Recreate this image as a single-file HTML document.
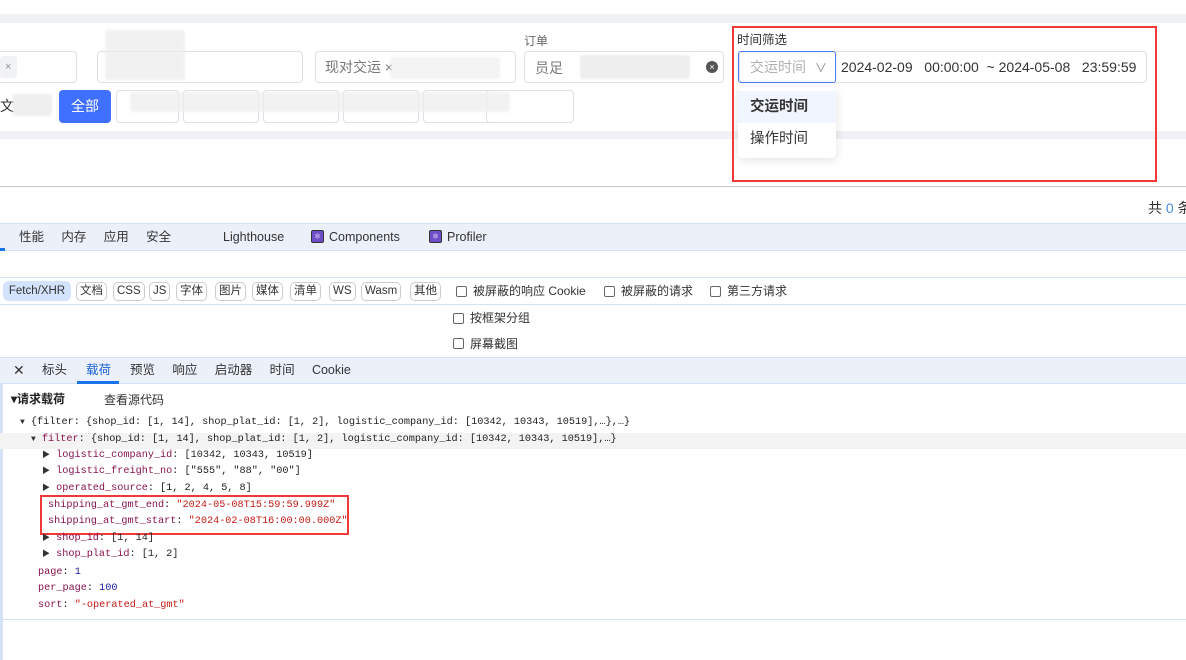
<!DOCTYPE html>
<html><head><meta charset="utf-8"><style>
*{margin:0;padding:0;box-sizing:border-box}
body{width:1186px;height:660px;position:relative;overflow:hidden;background:#fff;font-family:"Liberation Sans","Noto Sans CJK SC",sans-serif;font-size:13px;color:#333}
.a{position:absolute;white-space:nowrap;line-height:16px}
.bl{position:absolute;background:#e2e2e2;border-radius:3px;filter:blur(1px)}
.inp{position:absolute;border:1px solid #dcdfe6;border-radius:4px;background:#fff}
.btn{position:absolute;border:1px solid #dcdfe6;border-radius:4px;background:#fff;height:33px;top:90px}
.chip{position:absolute;top:282px;height:19px;border:1px solid #ccc;border-radius:5px;font-size:11.5px;line-height:17px;padding:0 3px;color:#333;background:#fff}
.cb{position:absolute;width:11px;height:11px;border:1px solid #666;border-radius:2px}
.mono{font-family:"Liberation Mono","Noto Sans CJK SC",monospace;font-size:10.2px;color:#222}
.k{color:#881350}.s{color:#c41a16}.n{color:#1a1aa6}
.t{font-size:8px;color:#333}
</style></head><body>
<div class="a" style="left:0;top:14px;width:1186px;height:9px;background:#f0f1f5"></div>
<div class="a" style="left:0;top:131px;width:1186px;height:8px;background:#f0f1f5"></div>
<div class="a" style="left:0;top:186px;width:1186px;height:1px;background:#c8c8c8"></div>

<div class="inp" style="left:-4px;top:51px;width:81px;height:32px"></div>
<div class="a" style="left:0;top:56px;width:17px;height:22px;background:#f0f2f5;border-radius:3px;color:#909399;font-size:11px;line-height:22px;padding-left:5px">×</div>
<div class="inp" style="left:97px;top:51px;width:206px;height:32px"></div>
<div class="bl" style="left:105px;top:30px;width:80px;height:50px;background:#ececec;opacity:.7"></div>
<div class="inp" style="left:315px;top:51px;width:201px;height:32px"></div>
<div class="a" style="left:325px;top:59px;font-size:14px;color:#777">现对交运 ×</div>
<div class="bl" style="left:390px;top:57px;width:110px;height:22px;background:#eee;opacity:.7"></div>
<div class="a" style="left:524px;top:33px;font-size:12px;color:#666">订单</div>
<div class="inp" style="left:524px;top:51px;width:200px;height:32px"></div>
<div class="a" style="left:535px;top:60px;font-size:14px;color:#777">员足</div>
<div class="bl" style="left:580px;top:55px;width:110px;height:24px;background:#e8e8e8;opacity:.7"></div>
<div class="a" style="left:706px;top:61px;width:12px;height:12px;border-radius:50%;background:#555;color:#fff;font-size:9px;line-height:12px;text-align:center">×</div>

<div class="a" style="left:0;top:98px;font-size:14px;color:#333">文</div>
<div class="bl" style="left:12px;top:94px;width:40px;height:22px;background:#e5e5e5;opacity:.6"></div>
<div class="a" style="left:59px;top:90px;width:52px;height:33px;background:#4070ff;border-radius:4px;color:#fff;font-size:14px;line-height:33px;text-align:center">全部</div>
<div class="btn" style="left:116px;width:63px"></div>
<div class="btn" style="left:183px;width:76px"></div>
<div class="btn" style="left:263px;width:76px"></div>
<div class="btn" style="left:343px;width:76px"></div>
<div class="btn" style="left:423px;width:76px"></div>
<div class="btn" style="left:486px;width:88px"></div>
<div class="bl" style="left:130px;top:92px;width:380px;height:20px;background:#efefef;opacity:.8"></div>

<div class="a" style="left:737px;top:32px;font-size:12.5px;color:#333">时间筛选</div>
<div class="inp" style="left:739px;top:51px;width:408px;height:32px"></div>
<div class="a" style="left:738px;top:51px;width:98px;height:32px;border:1px solid #4d7cfe;border-radius:3px;color:#b0b0b0;font-size:14px;line-height:30px;padding-left:11px">交运时间 <span style="font-size:12px;color:#888;margin-left:5px">∨</span></div>
<div class="a" style="left:841px;top:59px;font-size:14px;color:#333">2024-02-09&nbsp;&nbsp;&nbsp;00:00:00&nbsp;&nbsp;~ 2024-05-08&nbsp;&nbsp;&nbsp;23:59:59</div>
<div class="a" style="left:738px;top:87px;width:98px;height:71px;background:#fff;border-radius:4px;box-shadow:0 2px 10px rgba(0,0,0,.12)"></div>
<div class="a" style="left:738px;top:91px;width:98px;height:32px;background:#f0f5ff"></div>
<div class="a" style="left:750px;top:99px;font-size:14.5px;font-weight:bold;color:#333">交运时间</div>
<div class="a" style="left:750px;top:131px;font-size:14.5px;color:#333">操作时间</div>
<div class="a" style="left:732px;top:26px;width:425px;height:156px;border:2px solid #f03a3a"></div>

<div class="a" style="left:1148px;top:200px;font-size:14px;color:#333">共 <span style="color:#4a8bd8">0</span> 条</div>

<div class="a" style="left:0;top:223px;width:1186px;height:28px;background:#ebf0f9;border-top:1px solid #d3e2f7;border-bottom:1px solid #d3e2f7"></div>
<div class="a" style="left:0;top:248px;width:5px;height:3px;background:#1a73e8"></div>
<div class="a" style="left:19px;top:229px;font-size:12.5px;color:#333">性能&nbsp;&nbsp;&nbsp;&nbsp; 内存&nbsp;&nbsp;&nbsp;&nbsp; 应用&nbsp;&nbsp;&nbsp;&nbsp; 安全</div>
<div class="a" style="left:223px;top:229px;font-size:12.5px;color:#333">Lighthouse</div>
<div class="a" style="left:311px;top:230px;width:13px;height:13px;background:#6e4ec8;border:1px solid #333;border-radius:2px;color:#fff;font-size:8px;line-height:11px;text-align:center">⚛</div>
<div class="a" style="left:329px;top:229px;font-size:12.5px;color:#333">Components</div>
<div class="a" style="left:429px;top:230px;width:13px;height:13px;background:#6e4ec8;border:1px solid #333;border-radius:2px;color:#fff;font-size:8px;line-height:11px;text-align:center">⚛</div>
<div class="a" style="left:447px;top:229px;font-size:12.5px;color:#333">Profiler</div>

<div class="a" style="left:0;top:277px;width:1186px;height:1px;background:#d3e2f7"></div>
<div class="a" style="left:0;top:304px;width:1186px;height:1px;background:#d3e2f7"></div>
<div class="a" style="left:3px;top:281px;height:20px;width:68px;background:#d3e3fd;border-radius:6px;font-size:11.5px;line-height:20px;text-align:center;color:#333">Fetch/XHR</div>
<div class="chip" style="left:76px">文档</div>
<div class="chip" style="left:113px">CSS</div>
<div class="chip" style="left:149px">JS</div>
<div class="chip" style="left:176px">字体</div>
<div class="chip" style="left:215px">图片</div>
<div class="chip" style="left:252px">媒体</div>
<div class="chip" style="left:290px">清单</div>
<div class="chip" style="left:329px">WS</div>
<div class="chip" style="left:361px">Wasm</div>
<div class="chip" style="left:410px">其他</div>
<div class="cb" style="left:456px;top:286px"></div><div class="a" style="left:473px;top:283px;font-size:12px">被屏蔽的响应 Cookie</div>
<div class="cb" style="left:604px;top:286px"></div><div class="a" style="left:621px;top:283px;font-size:12px">被屏蔽的请求</div>
<div class="cb" style="left:710px;top:286px"></div><div class="a" style="left:727px;top:283px;font-size:12px">第三方请求</div>
<div class="cb" style="left:453px;top:313px"></div><div class="a" style="left:470px;top:310px;font-size:12px">按框架分组</div>
<div class="cb" style="left:453px;top:338px"></div><div class="a" style="left:470px;top:336px;font-size:12px">屏幕截图</div>

<div class="a" style="left:0;top:357px;width:1186px;height:27px;background:#ebf0f9;border-top:1px solid #d3e2f7;border-bottom:1px solid #d3e2f7"></div>
<div class="a" style="left:13px;top:362px;font-size:14px;color:#333">✕</div>
<div class="a" style="left:42px;top:362px;font-size:12.5px;color:#333">标头</div>
<div class="a" style="left:86px;top:362px;font-size:12.5px;color:#1a62d8">载荷</div>
<div class="a" style="left:77px;top:381px;width:42px;height:3px;background:#1a73e8"></div>
<div class="a" style="left:130px;top:362px;font-size:12.5px;color:#333">预览&nbsp;&nbsp;&nbsp;&nbsp; 响应&nbsp;&nbsp;&nbsp;&nbsp; 启动器&nbsp;&nbsp;&nbsp;&nbsp; 时间&nbsp;&nbsp;&nbsp;&nbsp; Cookie</div>
<div class="a" style="left:0;top:384px;width:3px;height:276px;background:#d3e2f7"></div>

<div class="a" style="left:11px;top:391px;font-size:12px;font-weight:bold;color:#222">▾请求载荷</div>
<div class="a" style="left:104px;top:392px;font-size:12px;color:#333">查看源代码</div>
<div class="a" style="left:0;top:433px;width:1186px;height:16px;background:#f3f3f3"></div>
<div class="a mono" style="left:20px;top:415px"><span class="t">▼</span> {filter: {shop_id: [1, 14], shop_plat_id: [1, 2], logistic_company_id: [10342, 10343, 10519],…},…}</div>
<div class="a mono" style="left:31px;top:432px"><span class="t">▼</span> <span class="k">filter</span>: {shop_id: [1, 14], shop_plat_id: [1, 2], logistic_company_id: [10342, 10343, 10519],…}</div>
<div class="a mono" style="left:42px;top:448px"><span class="t">▶</span> <span class="k">logistic_company_id</span>: [10342, 10343, 10519]</div>
<div class="a mono" style="left:42px;top:464px"><span class="t">▶</span> <span class="k">logistic_freight_no</span>: ["555", "88", "00"]</div>
<div class="a mono" style="left:42px;top:481px"><span class="t">▶</span> <span class="k">operated_source</span>: [1, 2, 4, 5, 8]</div>
<div class="a mono" style="left:48px;top:498px"><span class="k">shipping_at_gmt_end</span>: <span class="s">"2024-05-08T15:59:59.999Z"</span></div>
<div class="a mono" style="left:48px;top:514px"><span class="k">shipping_at_gmt_start</span>: <span class="s">"2024-02-08T16:00:00.000Z"</span></div>
<div class="a" style="left:40px;top:495px;width:309px;height:40px;border:2px solid #f03a3a"></div>
<div class="a mono" style="left:42px;top:531px"><span class="t">▶</span> <span class="k">shop_id</span>: [1, 14]</div>
<div class="a mono" style="left:42px;top:547px"><span class="t">▶</span> <span class="k">shop_plat_id</span>: [1, 2]</div>
<div class="a mono" style="left:38px;top:565px"><span class="k">page</span>: <span class="n">1</span></div>
<div class="a mono" style="left:38px;top:581px"><span class="k">per_page</span>: <span class="n">100</span></div>
<div class="a mono" style="left:38px;top:598px"><span class="k">sort</span>: <span class="s">"-operated_at_gmt"</span></div>
<div class="a" style="left:0;top:619px;width:1186px;height:1px;background:#d3e2f7"></div>
</body></html>
